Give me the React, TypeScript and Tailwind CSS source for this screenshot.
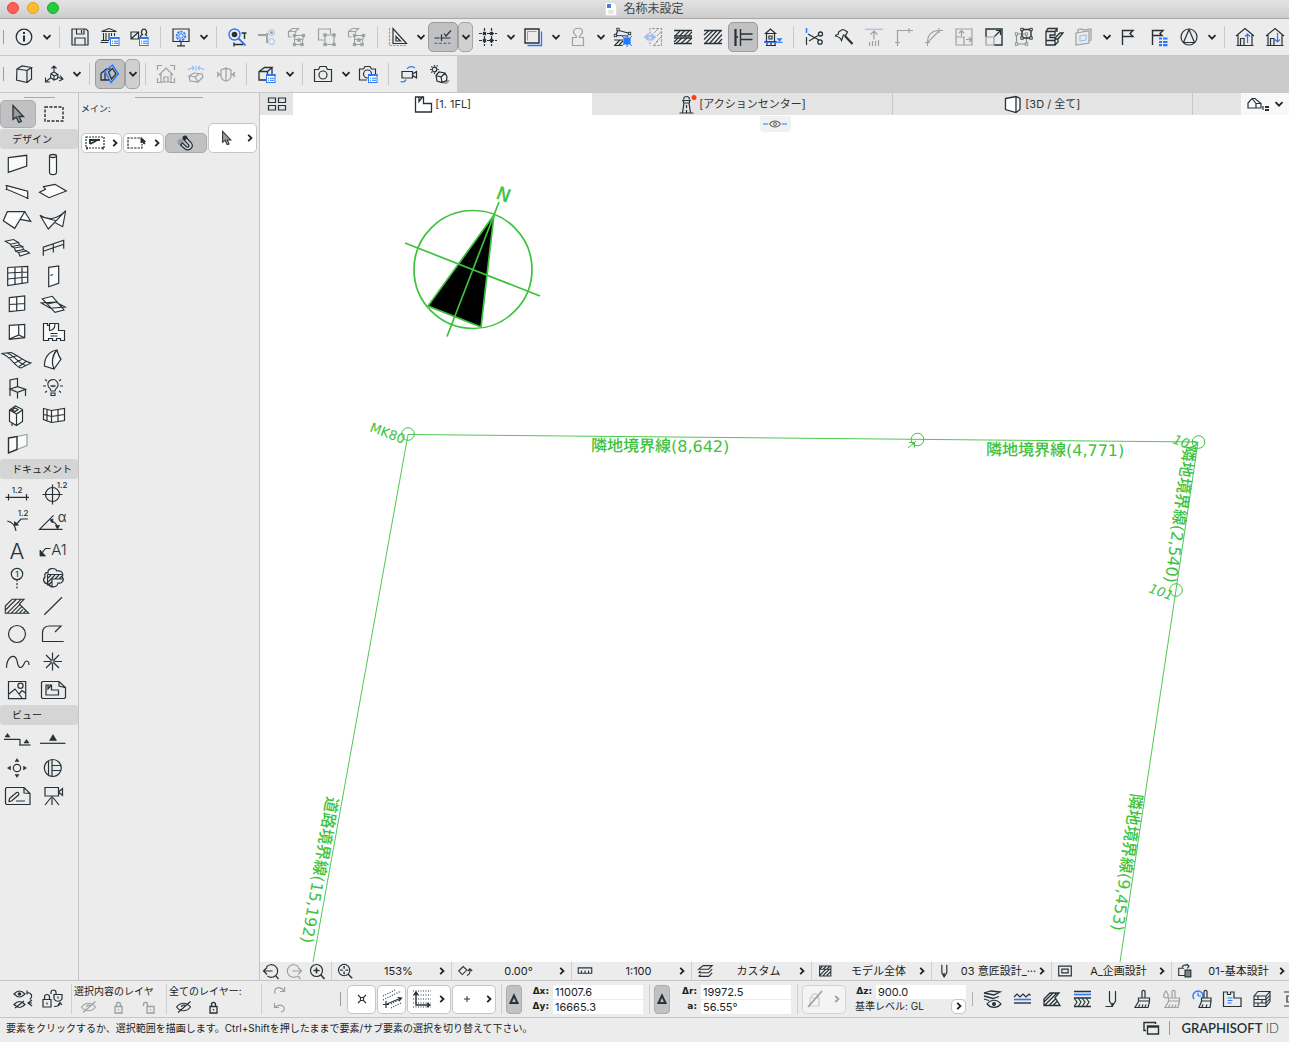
import React, { useState } from "react";

const BLUE = "#2979ff";
const GREEN = "#3cc23c";

interface PProps {
  d: string;
  c?: string;
  f?: string;
  w?: number;
  dash?: string;
}

// one stroked path of an icon
const P = ({ d, c = "currentColor", f = "none", w = 1.2, dash }: PProps) => (
  <path d={d} stroke={c} fill={f} strokeWidth={w} strokeDasharray={dash} />
);

const Badge = ({ x = 12, y = 12 }: { x?: number; y?: number }) => (
  <g transform={`translate(${x} ${y})`}>
    <rect x=".5" y=".5" width="8.5" height="8" fill="#fff" stroke={BLUE} />
    <P d="M0 1h9.5" c={BLUE} w={2} />
    <P d="M2 4.2h1M4 4.2h4M2 6.3h1M4 6.3h4" c={BLUE} w={1} />
  </g>
);

const T = ({ x, y, s, children }: { x: number; y: number; s: number; children: string }) => (
  <text x={x} y={y} fontSize={s} fontWeight="500" textAnchor="middle" fill="currentColor">
    {children}
  </text>
);

const nodes = (pts: number[][], fill = "currentColor") =>
  pts.map(([x, y]) => (
    <rect key={`${x}-${y}`} x={x - 1.2} y={y - 1.2} width="2.4" height="2.4" fill={fill} stroke="currentColor" strokeWidth=".9" />
  ));

interface Tool {
  name: string;
  icon: React.ReactNode;
  menu?: boolean;
  active?: boolean;
  dim?: boolean;
}

const house = "M3 11l9-7.5 9 7.5M5 10v10.5h14V10M7.5 20.5v-7h3.5v7M3.5 20.5h17";
const camera = "M3.5 7.5h4l1.500-3h6l1.500 3h4v12h-17z";
const nodeCube = (
  <>
    <P d="M3.500 12V6.500l4-3h6l-3 3h-7M10.500 6.500v2M3.500 12h3" />
    <P d="M9.500 10.500h9l-1.500 9H9.500zM9.500 14.500h8.500" w={1} />
    {nodes([[9.5, 10.5], [18.5, 10.5], [9.5, 19.5], [17, 19.5], [14, 15]])}
  </>
);

const mainTools: Tool[][] = [
  [
    { name: "情報", menu: true, icon: <><circle cx="12" cy="12" r="7.800" fill="none" stroke="currentColor" strokeWidth="1.300" /><P d="M12 10.500v6M12 7v2" w={2} /></> },
  ],
  [
    { name: "保存", icon: <><P d="M4 4h14l2 2v14H4z" /><P d="M8.500 4v5h7.500V4M13.500 5v3M7 20v-7h10v7" /></> },
    { name: "ライブラリ", icon: <><P d="M3.500 6.500h15M3.500 6.500l7.500-3 7.500 3M5.500 8v7M8 8v7M11 8v7M13.500 8v3M16.500 8v3M3 15.500h8M2.500 17.500h8" w={1.100} /><Badge /></> },
    { name: "属性", icon: <><P d="M3 7h7.500v7H3zM3 14l7.500-7M12.500 14V11l2-1.500a2.500 3 0 1 1 3 0l1.500 1.500" /><Badge x={11} /></> },
  ],
  [
    { name: "作業環境", menu: true, icon: <><P d="M4 4h16v12.500H4zM12 17v4M8 20.800h8" /><circle cx="12" cy="11" r="4.300" fill="none" stroke={BLUE} strokeWidth="1.800" strokeDasharray="2.200 1" /><circle cx="12" cy="11" r="2.200" fill="#ececec" stroke={BLUE} /></> },
  ],
  [
    { name: "検索", icon: <><circle cx="9.500" cy="9.500" r="5.500" fill="none" stroke={BLUE} strokeWidth="1.400" /><circle cx="9.500" cy="9.500" r="2.800" fill="currentColor" /><P d="M13.500 13.500l7 7" c={BLUE} w={1.800} /><P d="M16.500 8h5M19.500 8v6M9 19.500h9M9 17.500v4" w={1.400} /></> },
    { name: "接続", dim: true, icon: <><P d="M3 10h8M12 8v10" w={1.800} /><circle cx="16.500" cy="7.500" r="3" fill="none" stroke={BLUE} /><circle cx="16.500" cy="7.500" r="1.500" fill="currentColor" /><circle cx="16.500" cy="16.500" r="3" fill="none" stroke={BLUE} /></> },
    { name: "グループ化", dim: true, icon: nodeCube },
    { name: "グループ解除", dim: true, icon: <><P d="M9 15H3.500V4h12v5" /><P d="M10 10h9v9.500h-9z" />{nodes([[10, 10], [19, 10], [10, 19.5], [19, 19.5]])}</> },
    { name: "グループ停止", dim: true, icon: nodeCube },
  ],
  [
    { name: "定規", menu: true, icon: <><P d="M7 3.500V18.500h13.500zM10 11.500v4.500h4.500z" /><P d="M3.500 3v17.500h17.500" c="#f08a24" dash="2.500 1" /></> },
    { name: "ガイド線", menu: true, active: true, icon: <><P d="M3.500 13h5M9.500 13h10M10.500 9.500v6.500M13 8.500l2 2.500 5-5.500" /><P d="M3.500 18.300h16" c={BLUE} dash="3 1.500" /></> },
    { name: "グリッド", menu: true, icon: <><P d="M3 8.500h18M3 15.500h18M8.500 3v18M15.500 3v18" dash="3 1" />{nodes([[8.5, 8.5], [15.5, 8.5], [8.5, 15.5], [15.5, 15.5]])}</> },
    { name: "編集平面", menu: true, icon: <><P d="M4 4h14v14H4z" w={1.400} /><P d="M6.500 15.500v-9h9" c="#9aa0a3" w={1} /><P d="M20.500 6.500V20.500H6.500" c={BLUE} w={1.300} /></> },
    { name: "重力", menu: true, dim: true, icon: <P d="M6.500 20.500V12.500h4c1-2-3-3-3-5.500 0-5 9-5 9 0 0 2.500-4 3.500-3 5.500h4v8z" /> },
    { name: "要素編集", icon: <><P d="M8 5.500l9 2.500M5.500 10.500l12 .5" /><P d="M5 9.500l2-4" />{nodes([[4.5, 10.5], [7, 4.5], [18.5, 8.5]], "#ececec")}<P d="M3 15h9M3 20.500h9M4 20l5-5M8 20l4-4" /><P d="M13 13h6v6h-6z" c={BLUE} f={BLUE} /><P d="M11 11l10 10M21 11L11 21M16 10v12" c={BLUE} w={1} /></> },
    { name: "反転", dim: true, icon: <><P d="M7.500 8L3 12l4.500 4zM10.500 8l4.500 4-4.500 4z" c={BLUE} f={BLUE} w={.5} /><P d="M9 3v18" dash="2 1.500" /><P d="M11 3.500h9.500v17H11" dash="3 1" /><P d="M13 8l4-4M16 11l4-4M15 17l5-5M13 20l4-4" w={1} /></> },
    { name: "複合構造", icon: <><P d="M3 5.500h18M3 11h18M3 13h18M3 18.500h18" w={1.400} /><P d="M4 11l5-5M8.500 11l5-5M13 11l5-5M17 11l4-4M3 17l4-4M5 18.500l6-5.500M10 18.500l6-5.500M15 18.500l6-5.500" w={1.100} /></> },
    { name: "塗りつぶし", icon: <><P d="M3 5.500h18M3 18.500h18" w={1.400} /><P d="M3 10l5-4.500M3 14.500l9-9M4 18.500l12-13M8.500 18.500l11.500-13M13 18.500l8-9M17 18.500l4-4.500" w={1.200} /></> },
    { name: "基準線", active: true, icon: <><P d="M4.500 4v17" w={2.200} /><P d="M9.500 4v17M9.500 9h12M9.500 14.500h12M4 12h3" w={1.400} /></> },
    { name: "高度", icon: <><P d="M4.500 8.500L9.500 4l5 4.500zM5.500 8.500v8M13.500 8.500v8M8 11h3v3H8zM3.500 16.500h12M5 20.500h10M6 17v3.500M10 17v3.500M14 17v3.500" w={1.200} /><P d="M3 17.300h18.500" c={BLUE} /><P d="M16 13.500h5l-2.500 3z" c={BLUE} f={BLUE} w={.5} /></> },
  ],
  [
    { name: "切断", icon: <><P d="M4.500 3v5" c={BLUE} w={1.500} /><P d="M4.500 12v8M6 9l11 6M7 16l10-6" /><circle cx="18.500" cy="9" r="2" fill="none" stroke="currentColor" strokeWidth="1.300" /><circle cx="18" cy="17" r="2.200" fill="none" stroke="currentColor" strokeWidth="1.300" /></> },
    { name: "手斧", icon: <><P d="M3.500 10.500l3-1.500V7l4-2.500c2 0 3 1 5 2.500l-2 3.500-2-.5-2 5.500c-1-3-3-4-6-4.500z" /><P d="M13 11l7.500 8" w={2.200} /></> },
    { name: "高さ調整", dim: true, icon: <><P d="M3 4.300h18" c={BLUE} /><P d="M12 6v8.500M8.500 9.500L12 6l3.500 3.500M7.500 17v4M10.500 16v5M13.500 16v5M16.500 15v6" /></> },
    { name: "延長", dim: true, icon: <P d="M5.500 21V5.500H21M3 17.500h5M17 3v5" /> },
    { name: "フィレット", dim: true, icon: <P d="M5.500 21v-4C5.500 10 10 5.500 17 5.500h4M3 17.500h5M17 3v5M6 17L17 6" w={1.100} /> },
    { name: "伸縮", dim: true, icon: <P d="M4 4h16v16H4zM4 12h8v8M9.500 11V6M7 8l2.500-2.500L12 8M14 14.500h5M17 12l2.500 2.500L17 17" /> },
    { name: "サイズ変更", icon: <><P d="M12 20h8V4H4v8" w={1.400} /><P d="M4 12h8v8H4z" c="#9aa0a3" /><P d="M12.500 11.500l6-6M14 5.500h4.500V10" /></> },
    { name: "変形", icon: <><P d="M4.500 9v10h10V9z" c="#8a9093" /><P d="M10 4.500h9V13h-9z" w={1.400} /><g className="text-[#8a9093]">{nodes([[4.5, 9], [4.5, 19], [14.5, 19], [14.5, 9]], "#ececec")}</g>{nodes([[10, 4.5], [19, 4.5], [10, 13], [19, 13]], "#ececec")}</> },
    { name: "ソリッド", icon: <P d="M4 6.500h9V10H8v2.500h5v3H4zM4 6.500l2-3h9l-2 3M4 15.500v4.500h9v-4.500M13 20l3-3v-3M15 3.500V7M13 13l5-5h3l-5 6h-3" w={1.300} /> },
    { name: "イメージ", menu: true, dim: true, icon: <><P d="M4 8l13-2v12L4 20zM6 7V4.500l4-.5 1 1 8-1v11l-2 .5" /><P d="M8 11l6-1v5l-6 1z" c={BLUE} /></> },
    { name: "フラグ", icon: <P d="M5.500 20V5.500H16l-3 3 3 3H5.500" w={1.400} /> },
    { name: "フラグ一覧", icon: <><P d="M5.500 20V5.500H16l-3 3 2 2H5.500" w={1.400} /><P d="M12 13.500h3M16 13.500h4.500M12 17h3M16 17h4.500M12 20.200h3M16 20.200h4.500" c={BLUE} w={2.200} /></> },
    { name: "公差", menu: true, icon: <><circle cx="12" cy="12" r="8" fill="none" stroke="currentColor" strokeWidth="1.200" /><P d="M12 4.500L6.500 17.500h11z" /></> },
  ],
  [
    { name: "送信", icon: <><P d={house} /><P d="M14.500 18V9M12 11.500L14.500 9l2.500 2.500" c={BLUE} /></> },
    { name: "受信", icon: <><P d={house} /><P d="M14.500 8v9M12 14.500l2.500 2.500 2.500-2.500" c={BLUE} /></> },
  ],
];

const viewTools: Tool[][] = [
  [
    { name: "3D", icon: <P d="M5 7l10 1.500v12L4.500 18zM5 7l5-3 9.500 1.500L15 8.500M19.500 5.500v11.500L15 20.500" /> },
    { name: "軸", menu: true, icon: <P d="M12 10V4M9.500 6.500L12 4l2.500 2.500M9 15.500l-5 4M3.500 15.500V20H8M16 15l4.500 2M18 13.500l3 3.500-4 2M12 10l4 2.500-.5 4-3.500 1.500-3.500-2.500.5-4zM12 14l-3-2.500M12 14l4-1.500M12 14v4" w={1.100} /> },
  ],
  [
    { name: "3D断面", menu: true, active: true, icon: <><P d="M3 11.500L8.500 7h4M3 11.500V18h8M7 10.500V18" w={1.300} /><P d="M7 9.500L14.500 3l6 9-7.500 8.500z" c={BLUE} w={1.400} /><P d="M10.500 10l4-3.500L18 12l-4.500 5z" w={1.300} /></> },
  ],
  [
    { name: "ホーム", dim: true, icon: <P d="M3.500 8V3.500H8M16 3.500h4.500V8M3.500 16v4.500H8M16 20.500h4.500V16M5 13l7-7 7 7M7 12v8h10v-8M10 20v-5h4v5" /> },
    { name: "アップデート", dim: true, icon: <><P d="M12 4v5M4 8c1-2 3-2 6-2M8 4l2 2-2 2M20 8c-1-2-3-2-6-2M16 4l-2 2 2 2" c={BLUE} /><P d="M5 14l5-3 8 1 1 3-5 5-8-1zM5 14l6 1 3 5M11 15l4-3" /></> },
    { name: "ウォーク", dim: true, icon: <P d="M12 5v14M7 8c3-2 7-2 10 0v6c0 3-3 5-5 5s-5-2-5-5zM3 10l2.500 2.500L3 15M3 12.500h4M21 10l-2.500 2.500L21 15M17 12.500h4" /> },
  ],
  [{ name: "3D設定", menu: true, icon: <><P d="M11 18H4V9.500L9.500 5.500H17L12.500 9.500H4M12.500 9.500V12M17 5.500V12" w={1.300} /><Badge x={11} /></> }],
  [
    { name: "カメラ", menu: true, icon: <><P d={camera} /><circle cx="12" cy="13" r="4" fill="none" stroke="currentColor" strokeWidth="1.200" /></> },
    { name: "カメラ設定", icon: <><P d="M11 18H3.500V7h4L9 4.500h5L15.500 7h4v5" /><circle cx="11.500" cy="12" r="4" fill="none" stroke="currentColor" strokeWidth="1.200" /><Badge /></> },
  ],
  [
    { name: "フライスルー", icon: <><P d="M10 7c2-3 6-3 8-1M3.500 19.500c3 1 5 0 5.500-2" c={BLUE} w={1.300} /><P d="M5 9.500h10.500V16H5zM15.500 12l4-2.500v6.500l-4-2.500" /></> },
    { name: "日影", icon: <><circle cx="7.500" cy="7.500" r="2.300" fill="none" stroke="currentColor" strokeWidth="1.200" /><P d="M7.500 3v1.500M7.500 10.500V12M3 7.500h1.500M10.500 7.500H12M4.300 4.300l1 1M9.700 4.300l1-1M4.300 10.700l1-1" /><P d="M14 20l5-2 3 1-3 2.500z" c="#9aa0a3" f="#9aa0a3" /><P d="M9 13.500l3-3.500 6 1 2 3.500-.5 4-4.500 2-5-1.500zM9 13.500l5 1.500 1 5M14 15l4-4" f="#ececec" /></> },
  ],
];

const ChevronDown = () => (
  <svg viewBox="0 0 10 10" className="size-[10px]">
    <P d="M1.500 3.200L5 6.700l3.500-3.500" c="#222" w={1.700} />
  </svg>
);

const ChevronRight = ({ className = "text-[#222]" }: { className?: string }) => (
  <svg viewBox="0 0 10 10" className={`size-[10px] shrink-0 ${className}`}>
    <P d="M3.200 1.800L6.500 5 3.200 8.200" w={1.800} />
  </svg>
);

function ToolbarRow({ groups }: { groups: Tool[][] }) {
  return (
    <>
      {groups.map((group, i) => (
        <React.Fragment key={i}>
          {i > 0 && (
            <div className="flex w-[11px] shrink-0 justify-center">
              <span className="h-[22px] w-px bg-[#c9c9c9]" />
            </div>
          )}
          {group.map((tool) => (
            <React.Fragment key={tool.name}>
              <button
                type="button"
                aria-label={tool.name}
                className={`flex h-[30px] w-[30px] shrink-0 items-center justify-center rounded-[5px] border ${
                  tool.active ? "border-[#9c9c9c] bg-[#c1c1c3]" : "border-transparent"
                }`}
              >
                <svg viewBox="0 0 24 24" className={`size-6 shrink-0 text-[#263238] ${tool.dim ? "opacity-40" : ""}`}>
                  {tool.icon}
                </svg>
              </button>
              {tool.menu && (
                <button
                  type="button"
                  aria-label={`${tool.name} メニュー`}
                  className={`flex h-[30px] w-[15px] shrink-0 items-center justify-center rounded-[5px] border ${
                    tool.active ? "border-[#a4a4a4] bg-[#d0d0d2]" : "border-transparent"
                  }`}
                >
                  <ChevronDown />
                </button>
              )}
            </React.Fragment>
          ))}
        </React.Fragment>
      ))}
    </>
  );
}

const W = "#fafafa";

const designTools: [string, React.ReactNode][] = [
  ["壁", <P d="M4.300 7.700L22.700 5.300V16L4.300 22.300z" f={W} />],
  ["柱", <><P d="M9.500 6.500V22c0 3.500 7 3.500 7 0V6.500" f={W} /><ellipse cx="13" cy="6" rx="3.500" ry="1.500" fill={W} stroke="currentColor" strokeWidth="1.300" /></>],
  ["梁", <P d="M2.700 7.700l21 5.500v7l-21-9zM1.500 7.500h2M1.500 11.500h2M22.500 20.500h2" f={W} />],
  ["スラブ", <P d="M-.5 14.300l6-3-2-2.600L15 6.300l11.300 6.700L9 19.700z" f={W} />],
  ["屋根", <P d="M-.7 14.700l4-9h17.400l-10 16.600zM20.700 5.700l6 9.600-10.500-2" f={W} />],
  ["シェル", <P d="M0 9.300C8 15 18 13 25.700 4.700L8.300 23zM25.700 4.700l-3 16-7.500-4M2 11L15.500 14.500" f={W} w={1.100} />],
  ["階段", <P d="M1.300 7.300L9.500 5.500l5 3-8 1.700zM6.500 10.200l1 2.300 8-1.500-1-2.500M7.500 12.500l3 1.500 8-1.500-3-1.500M10.500 14l1 3 8-1.500-1-3M11.500 17l3 1.500 8-1.500-3-1.500M14.500 18.500L16 22l9.500-3-3-2" f={W} w={1.100} />],
  ["手摺り", <P d="M3.300 21.700v-8.500L23.700 6.300v8.500M3.300 17.300l20.400-7M13.300 10v8.500" />],
  ["カーテンウォール", <P d="M3.700 5.500l20-1v16l-20 3zM3.700 11l20-1M3.700 17l20-2M11 5v18M18 5v16.500" f={W} />],
  ["ドア", <P d="M8.700 5.300L18.700 4v17.300L8.700 24.700zM10.500 13.500l2.500-1" f={W} />],
  ["窓", <P d="M5.300 7.700L20.700 6v14L5.300 21.700zM12.700 7v14M5.300 14.500l15.400-1" f={W} />],
  ["天窓", <P d="M2.300 8.700l10-2.400L24 20l-9 2.300zM1.300 13l9 5.300 15-1.300-9.500-5zM7 14l10-2" f={W} w={1.100} />],
  ["開口", <P d="M5.300 7.300l15.400-1v13.400L5.300 21.300zM14.700 6.800V17l-9.400 4M14.700 17l6 2.700" f={W} />],
  ["ゾーン", <><P d="M3.500 5.500h4v2h2v-2h9v7h6v10h-4v-2h-4v2h-4v-2h-4v2h-5z" f={W} /><P d="M9.500 7.500v5c4 0 5.500-3 5.500-7M10.500 15.500h7M10.500 18h7" w={1.100} /></>],
  ["メッシュ", <P d="M-2.700 7.500L7 6.500c6 2 11 8 20 10.500l-10 5C10 20 7 10-2.700 7.500zM2.500 7C11 9 13 17 22 19.500M5 12l8.500-2.500M10 17.500l8.500-4.500M15 20.500l7-5" w={1.100} f={W} />],
  ["モルフ", <P d="M4.500 20C4 12 9 5 17 4c1 4 2 7 4 9l-7 10zM17 4c-5 5-6 13-3 19" f={W} />],
  ["オブジェクト", <P d="M6 22V6l7.500-1.500V13M6 15l7.500-2.300 8 2.600-8 3zM13.500 18.500v6M21.500 15.500V22" />],
  ["ランプ", <P d="M8 11.500a5 5 0 1 1 8 3l-1 2.500h-4l-1-2.500a5 5 0 0 1-2-3M11 19v2.500h4V19zM10.500 11.500l1.500 1 1-1 1 1 1.500-1M3 12h3M20 12h3M5 5.500l2 1.500M21 5.500L19 7M5 18.500l2-1.500M21 18.500l-2-1.500" w={1.100} />],
  ["設備", <P d="M5.500 8l6-4 7 3.500v12l-6 4-7-4zM5.500 8l7 4 6-4M12.500 12v11.500M8 8l3-2 3 1.500-3 2zM8 21v3" f={W} />],
  ["カーテン", <P d="M3.500 6.500l8 2 13-2v12l-13 2-8-3zM3.500 12.500l8 2 13-2M11.500 8.500v12M7 7.500v12M18 7.500v12" f={W} />],
  ["端部", <><P d="M13 6.500l10-2v11l-10 4" c="#9aa0a3" f={W} /><P d="M4.500 8l8.500-1.500v13L4.500 23z" f={W} w={1.400} /></>],
];

const documentTools: [string, React.ReactNode][] = [
  ["寸法", <><P d="M1.500 17.300h23.500M4.500 14v6.500M22.500 14v6.500" /><T x={13} y={13} s={8}>1.2</T></>],
  ["高さ寸法", <><circle cx="12.500" cy="14.500" r="7" fill="none" stroke="currentColor" strokeWidth="1.200" /><P d="M12.500 4.500v20M2.500 14.500h20" /><T x={22} y={8} s={8}>1.2</T></>],
  ["半径寸法", <><P d="M3.300 13c5 1 8 5 8.700 10M12 16.500l5-5.500h7" /><P d="M10.500 17.500v-4l4 3.500z" f="currentColor" w={.8} /><T x={19} y={8} s={8}>1.2</T></>],
  ["角度寸法", <><P d="M22.500 21.300H-.5l14-14M11 13c4 1 6 4 6.500 7" /><P d="M10 12l3-1-.5 4zM15.500 17.500h4l-2 3.500z" f="currentColor" w={.8} /><text x="22" y="14" fontSize="13" textAnchor="middle" fill="currentColor">α</text></>],
  ["テキスト", <text x="13" y="22.500" fontSize="22" fontWeight="300" textAnchor="middle" fill="currentColor">A</text>],
  ["ラベル", <><P d="M1.500 17.500l4-5h5" /><P d="M0 14v6h5.500z" f="currentColor" w={.8} /><text x="19" y="18.500" fontSize="15" fontWeight="300" textAnchor="middle" fill="currentColor">A1</text></>],
  ["通り芯", <><circle cx="13" cy="10" r="5.700" fill="none" stroke="currentColor" strokeWidth="1.200" /><T x={13} y={13} s={8}>1</T><P d="M13 15.500v9" dash="2 1.500" /></>],
  ["変更", <><P d="M8 9c-1-5 7-6 9-2 5-1 7 3 5 6 3 3 0 7-4 6-1 5-8 5-9 1-5 0-7-4-4-7-1-3 1-5 3-4z" /><P d="M7.500 10.500H22M7.500 10.500v11M12 15h10.500M12 15v8M8 14l3-3M8 18l7-7M8 21.500l4-4M15 15l4-4M19 15l3-3" w={1.100} /></>],
  ["塗りつぶし", <P d="M1.300 21.300V14L8 7.300h12L15.300 12l9.400 9.300zM1.500 18L12 7.500M3 21.300l14-14M7 21.300l8.500-8.500M11 21.300l6.500-6.500M15 21.300l4-4M19 21.300l2.500-2.500" w={1.100} />],
  ["線", <P d="M4.300 22.700L22 5.300" />],
  ["円", <circle cx="13" cy="14" r="8.500" fill="none" stroke="currentColor" strokeWidth="1.200" />],
  ["ポリライン", <P d="M23.700 21.500H2.500V13c0-5 3-7 7-7H21l-6 6" />],
  ["スプライン", <P d="M2.500 19.700C2.500 11 8 6 11.500 9.500c3 3 1 10 5 10s3-6.500 6-6.500c2 0 2.500 2 2.500 4" />],
  ["ホットスポット", <><P d="M12.500 4.500v7M12.500 15.500v7M3.500 13.500h7M14.500 13.500h7.500M6 7l5 5M19 7l-5 5M6 20l5-5M19 20l-5-5" /><rect x="11" y="12" width="3" height="3" fill="none" stroke="currentColor" /></>],
  ["図", <><P d="M4.500 5.500h17.200v17.200H4.500zM5 18l6-5 7 9M15 18l3-3.500 3.500 2.500" /><circle cx="16.500" cy="9.800" r="2.600" fill="none" stroke="currentColor" strokeWidth="1.200" /></>],
  ["図面", <><P d="M2.500 5.500H19l6.500 6v10l-1 1H2.500l-1-1v-15zM19 5.500v4.500l6 1.500" /><P d="M6 9h5.500v5h7v5H6zM8 9v4l3.500-4" /></>],
];

const viewPalette: [string, React.ReactNode][] = [
  ["断面図", <><P d="M0 13.300h16M16 13.300v5.500" /><P d="M15 19h11.500" /><P d="M1 11l2.500-3.500L6 11zM20 17l2.500-3.500L25 17z" f="currentColor" w={.6} /></>],
  ["立面図", <><P d="M0 17.300h25.500" /><P d="M9.500 14.500l3.500-6 3.500 6z" f="currentColor" w={.6} /></>],
  ["展開図", <><circle cx="13" cy="14" r="3.700" fill="none" stroke="currentColor" strokeWidth="1.200" /><P d="M11 7.500l2-3 2 3zM11 20.500l2 3 2-3zM6.500 12l-3 2 3 2zM19.500 12l3 2-3 2z" f="currentColor" w={.5} /></>],
  ["詳細図", <><circle cx="12.800" cy="14" r="8.500" fill="none" stroke="currentColor" strokeWidth="1.200" /><P d="M8.500 7v14M12 5.500v17M12 11.500h9M12 16.500h9" /></>],
  ["ワークシート", <><P d="M2.500 5.500H20l6 6v11H2.500l-1-1v-15zM20 5.500V11l6 .5" /><P d="M5.500 16.500l7-6c2-.5 3 1 2 2.500l-7 6-2.500.500zM12 19h9" /></>],
  ["カメラ", <P d="M5 5.500h13.500V14H5zM18.500 10l4-3.500v7zM12 14v2M11 15.500L5 23M13 15.500l6 7.500M12 15v8" />],
];

function Palette({ title, tools }: { title: string; tools: [string, React.ReactNode][] }) {
  return (
    <section>
      <h2 className="mt-px h-5 rounded-[3px] bg-[#d5d5d5] pl-3 text-[10px] leading-5">{title}</h2>
      <div className="mt-px grid w-[72px] grid-cols-2">
        {tools.map(([name, icon]) => (
          <button key={name} type="button" aria-label={name} className="flex h-7 items-center justify-center">
            <svg viewBox="0 0 28 28" className="size-7 overflow-visible text-[#263238]">
              {icon}
            </svg>
          </button>
        ))}
      </div>
    </section>
  );
}

const Cursor = ({ className }: { className: string }) => (
  <svg viewBox="0 0 14 20" className={className}>
    <P d="M2 1.500v14l3.300-2.500 2.500 5.500 2.500-1L8 12.500h4.500z" c="#263238" f="#9a9da0" w={1.300} />
  </svg>
);

const whiteBtn = "flex items-center justify-center rounded-[5px] border border-[#c6c6c6] bg-white";

function InfoBox() {
  return (
    <aside className="w-[181px] shrink-0 border-r border-[#c3c3c3]">
      <div className="mx-auto mt-1 h-px w-[68px] bg-[#a8a8a8]" />
      <p className="mt-1 pl-[2px] text-[9px] leading-[14px]">メイン:</p>
      <div className="mt-[7px] flex items-end gap-px pl-[2px]">
        <button type="button" aria-label="設定" className={`${whiteBtn} h-5 w-[41px] gap-[5px] pl-[2px]`}>
          <svg viewBox="0 0 20 14" className="h-[14px] w-5 text-[#263238]">
            <P d="M1 1h18v11H1z" dash="2 1" w={1.200} />
            <P d="M5 3v5M5 8l4-2 4-2.500M4 4h5M9 4h6" w={1.800} />
            <P d="M2 11v2.500M18 11v2.500" w={1.500} />
          </svg>
          <ChevronRight />
        </button>
        <button type="button" aria-label="選択方法" className={`${whiteBtn} h-5 w-[41px] gap-[5px] pl-[2px]`}>
          <svg viewBox="0 0 20 14" className="h-[14px] w-5 text-[#263238]">
            <P d="M13 2H1v10h14V8" dash="2.500 1" />
            <P d="M14 1.500V7l1.500-1 1.500 2 1-.5-1-2h1.500z" f="currentColor" w={1} />
          </svg>
          <ChevronRight />
        </button>
        <button type="button" aria-label="クイック選択" className="flex h-5 w-[42px] items-center justify-center rounded-[5px] border border-[#a9a9a9] bg-[#c1c1c3]">
          <svg viewBox="0 0 18 18" className="size-[18px] text-[#263238]">
            <circle cx="3.500" cy="8" r="3" fill="#9b9b9d" />
            <circle cx="8" cy="4" r="2.500" fill="currentColor" />
            <P d="M9.500 4l4.500 4.500c4 5-2.500 9.500-6.500 6L3.500 11l2-2 4 3.800c1.800 1.200 3.200-.6 2-2.100L7.500 6.500z" f="#d4d4d6" w={1.200} />
          </svg>
        </button>
        <button type="button" aria-label="矢印ツール" className={`${whiteBtn} h-[30px] w-[49px] gap-[13px] pl-[10px]`}>
          <Cursor className="h-4 w-[11px]" />
          <ChevronRight />
        </button>
      </div>
    </aside>
  );
}

function Drawing() {
  return (
    <svg
      viewBox="260 115 1029 847"
      preserveAspectRatio="xMinYMin slice"
      className="absolute inset-0 h-full w-full font-['DejaVu_Sans','Noto_Sans_CJK_JP',sans-serif]"
      fill="none"
      stroke={GREEN}
    >
      <circle cx="473" cy="269.500" r="59" strokeWidth="1.700" />
      <path d="M494 215l-66 91 53 21z" fill="#000" strokeWidth="1.700" />
      <path d="M499 202l-52 134.500M405 243l135 53" strokeWidth="1.700" />
      <path d="M408 434.500L1198 442M408 434.500L313 962M1198 442l-22 148-56 372" strokeWidth=".9" />
      <path d="M908 448l8-7M909 442.500h5.500v5" />
      <circle cx="408" cy="434" r="6.300" />
      <circle cx="917.500" cy="439.500" r="6.300" />
      <circle cx="1198.500" cy="442" r="6.300" />
      <circle cx="1176" cy="590" r="6.300" />
      <g fill={GREEN} stroke="none" fontSize="16" fontWeight="500">
        <text transform="translate(495 198) rotate(21)" fontSize="18" stroke={GREEN} strokeWidth=".4">N</text>
        <text transform="translate(591 451) rotate(.5)">隣地境界線(8,642)</text>
        <text transform="translate(986 455) rotate(.5)">隣地境界線(4,771)</text>
        <text transform="translate(1184 445) rotate(98)">隣地境界線(2,540)</text>
        <text transform="translate(1131 793) rotate(98)">隣地境界線(9,453)</text>
        <text transform="translate(327 796) rotate(100)">道路境界線(15,192)</text>
        <g fontSize="13">
          <text transform="translate(369 431) rotate(21)">MK80</text>
          <text transform="translate(1172 443) rotate(20)" fontStyle="italic">102</text>
          <text transform="translate(1148 592) rotate(20)" fontStyle="italic">101</text>
        </g>
      </g>
    </svg>
  );
}

function Tabs() {
  const [tab, setTab] = useState(0);
  const tabs = [
    { label: "[1. 1FL]", icon: <P d="M1.500 2h8v6.500h8V17h-16zM5 2v4.500L8.500 2" w={1.300} /> },
    { label: "[アクションセンター]", icon: <><P d="M5.500 4.500c0-4 6-4 6 0M4 5.500h9M5.500 8h6M5.500 6v2M11.500 6v2M6 8L4.500 17.500M11 8l1.500 9.500M1.500 18h14M8.500 10v3M8.500 15v2.500" w={1.200} /><circle cx="16" cy="2.500" r="2.500" fill="#ff3b12" /></> },
    { label: "[3D / 全て]", icon: <P d="M1.500 3.500L12 1.500l4 2v11l-4 3-10.500-3zM12 1.500v16" f="#fff" w={1.300} /> },
  ];
  return (
    <div className="flex h-[22px] shrink-0 bg-[#e4e4e4] text-[11px] text-[#333]">
      <button type="button" aria-label="タブ一覧" className="flex w-[33px] shrink-0 items-center justify-center">
        <svg viewBox="0 0 20 16" className="h-4 w-5 text-[#263238]">
          <P d="M1.500 2h7v4.500h-7zM11.500 2h7v4.500h-7zM1.500 9.500h7V14h-7zM11.500 9.500h7V14h-7z" />
        </svg>
      </button>
      {tabs.map((t, i) => (
        <button
          key={t.label}
          type="button"
          onClick={() => setTab(i)}
          className={`flex flex-1 items-center justify-center gap-[2px] ${tab === i ? "bg-white" : "border-r border-[#c8c8c8]"}`}
        >
          <svg viewBox="0 0 19 19" className="size-[19px] overflow-visible text-[#263238]">
            {t.icon}
          </svg>
          {t.label}
        </button>
      ))}
      <div className="w-12 shrink-0" />
      <button type="button" aria-label="ビュー切替" className="flex w-12 shrink-0 items-center justify-center gap-1 bg-[#f8f8f8]">
        <svg viewBox="0 0 24 18" className="h-[18px] w-6 text-[#263238]">
          <P d="M2 13V8l4-4.500h3l6 5V13zM6 3.500l4 5h5M10 8.500V13M17 11v4" />
          <P d="M19 12h4M19 15h4" w={1.800} />
        </svg>
        <ChevronDown />
      </button>
    </div>
  );
}

const quickOptions: [string, React.ReactNode][] = [
  ["153%", <><circle cx="9" cy="9" r="6.300" fill="none" stroke="currentColor" strokeWidth="1.300" /><P d="M13.500 13.500L18 18M9 4.500v3M9 10.500v3M4.500 9h3M10.500 9h3" w={1.600} /></>],
  ["0.00°", <P d="M3 10l5-5 4 4-5 5zM12 15c3-1 4-4 3.500-7M13 10l2.500-2.500L18 10" />],
  ["1:100", <P d="M2.500 6.500h15v6h-15zM6 9.500v3M10 9.500v3M14 9.500v3" />],
  ["カスタム", <P d="M3 8l5-4h10l-4 4zM3 12h11l4-4M3 16h11l4-4M3 12l2-2M3 16l2-2" />],
  ["モデル全体", <P d="M4 4.500h12.500v11H4zM4 8h12.500M4 8l3-3M8 8l3-3M12 8l3-3M4 15l7-7M8 15l7-7M12 15l4-4" />],
  ["03 意匠設計_···", <P d="M6.500 3v9L9 16.500l3-4.500V3M9 12v4" w={1.300} />],
  ["A_企画設計", <P d="M3 4.500h14v11H3zM6.500 8h7v4h-7z" w={1.300} />],
  ["01-基本設計", <><P d="M10 15H3V7h6M7 6V5c2-2 5-2 7-1M12 2.500L14.500 4.500 12.500 7" /><P d="M10 9h6.500v7.500H10z" f="#7f8486" /></>],
];

function QuickBar() {
  return (
    <div className="flex h-[18px] shrink-0 overflow-hidden bg-[#ececec] text-[11px]">
      <div className="flex w-[71px] shrink-0 items-center gap-[5px] pl-[2px] text-[#263238]">
        <button type="button" aria-label="前のズーム">
          <svg viewBox="0 0 18 18" className="size-[18px]"><P d="M4.500 5a6.300 6.300 0 1 1 1 9M1.500 9h9M5 5.500L1.500 9 5 12.500M14 14l2.500 3" /></svg>
        </button>
        <button type="button" aria-label="次のズーム" className="text-[#9aa0a3]">
          <svg viewBox="0 0 18 18" className="size-[18px]"><P d="M13.500 5a6.300 6.300 0 1 0-1 9M7.500 9h9M13 5.500L16.500 9 13 12.500M13 14l2.500 3" /></svg>
        </button>
        <button type="button" aria-label="拡大">
          <svg viewBox="0 0 18 18" className="size-[18px]"><circle cx="8.500" cy="8.500" r="6" fill="none" stroke="currentColor" strokeWidth="1.200" /><P d="M12.800 12.800L16.500 17M5.500 8.500h6M8.500 5.500v6" w={1.500} /></svg>
        </button>
      </div>
      {quickOptions.map(([label, icon]) => (
        <button key={label} type="button" className="flex w-[120px] shrink-0 items-center border-l border-[#cfcfcf] pr-1 pl-1">
          <svg viewBox="0 0 20 20" className="size-[18px] shrink-0 text-[#263238]">{icon}</svg>
          <span className="flex-1 pl-[6px] text-center whitespace-nowrap">{label}</span>
          <ChevronRight />
        </button>
      ))}
    </div>
  );
}

const Sep = ({ className = "" }: { className?: string }) => <span className={`h-[30px] w-px shrink-0 bg-[#cfcfcf] ${className}`} />;

const eyeOff = <P d="M1.500 8c4-5 10-5 14 0-4 5-10 5-14 0zM3 13.500L15.500 2.500M6.500 8a2.200 2.200 0 0 1 4-1" />;
const lock = <P d="M5 7.500h7V14H5zM6.500 7.500V5.500a2 2.200 0 0 1 4 0v2M8.500 10v1.500" w={1.300} />;
const unlock = <P d="M7 7.500h7V14H7zM3.500 7V5.500a2 2.200 0 0 1 4 0v2M10.500 10v1.500" w={1.300} />;

const MiniButton = ({ name, dim, children }: { name: string; dim?: boolean; children: React.ReactNode }) => (
  <button type="button" aria-label={name} className={dim ? "text-[#9aa0a3]" : "text-[#263238]"}>
    <svg viewBox="0 0 17 16" className="h-4 w-[17px]">{children}</svg>
  </button>
);

function Field({ label, value, id }: { label: string; value: string; id: string }) {
  const [text, setText] = useState(value);
  return (
    <div className="flex items-center gap-1">
      <label htmlFor={id} className="w-[23px] text-right font-['DejaVu_Sans',sans-serif] text-[9px] font-bold whitespace-nowrap">
        {label}
      </label>
      <input
        id={id}
        value={text}
        onChange={(e) => setText(e.target.value)}
        className="h-[14px] w-[90px] bg-white pl-[2px] text-[11px] leading-[14px] outline-none"
      />
    </div>
  );
}

const DeltaButton = ({ name }: { name: string }) => (
  <button type="button" aria-label={name} className="flex h-[29px] w-4 shrink-0 items-center justify-center rounded-[4px] border border-[#adadad] bg-[#c1c1c3]">
    <svg viewBox="0 0 12 12" className="size-3 shrink-0"><P d="M6 2.500L2.500 10h7z" c="#263238" w={2} /></svg>
  </button>
);

const brush = "M12 11V4.500c0-1.500 3-1.500 3 0V11M8.500 14v-3h11v3zM8.500 14.500L5 20.500h13l1.500-6M8.500 20l1.500-2.500M12 20l1-2.500M15 20l1-2.500";

const optionTools: [string, React.ReactNode][] = [
  ["レイヤー設定", <><P d="M4 6l7-2 9 1-6 3zM4 9l9 2.500 6-2M4 12l5 1.500" w={1.300} /><P d="M7 17c4-5 10-5 14 0-4 4.500-10 4.500-14 0z" f="#ececec" /><circle cx="14" cy="17" r="2" fill="currentColor" /></>],
  ["線種", <><P d="M4 10l3-3 3 3 3-3 3 3 3-3 1.500 1.500" /><P d="M4 12.500h17" c={BLUE} w={1.600} /><P d="M4 16h17" w={1.400} /></>],
  ["塗りつぶし", <P d="M4 18.500V12L10 6h9l-4 4.500 5 8zM4.500 14.500L13 6M5 18L16.500 6.500M9 18.500l7-7M13 18.500l4-4" w={1.300} />],
  ["複合構造", <><P d="M4 4.500h17M4 11h17M4 19.500h17" w={1.300} /><P d="M4 7.500h17" c={BLUE} w={1.600} /><P d="M4 11l3 4-2.500 4M8 11l3 4-2.500 4M12 11l3 4-2.500 4M16 11l3 4-2.500 4" w={1.200} /></>],
  ["ペン", <P d="M9.500 4v10l3 5 3-5V4M5.500 19.500h7M12.500 16v3" />],
  ["ビルディングマテリアル", <P d={brush} />],
  ["表面材質", <g opacity=".4"><P d="M6 4c4 5 2 7 0 7s-4-2 0-7z" /><P d={brush} /></g>],
  ["更新", <><circle cx="8" cy="9" r="5" fill="none" stroke={BLUE} strokeWidth="1.400" strokeDasharray="24 8" strokeDashoffset="-12" /><P d="M8 9V5.500M8 9h3" c={BLUE} /><P d="M14 11V4.500c0-1.500 3-1.500 3 0V11M11.500 14v-3h9.500v3zM11.500 14.500L9 20.500h11l1-6M12 20l1-2.500M16 20l1-2.500" f="#ececec" /></>],
  ["ゾーン", <><P d="M3.500 5h4v2.500h3V5H14v6h7v8.500H3.500z" /><P d="M7.500 11h5M7.500 13.500h5M7.500 16h4" c={BLUE} /></>],
  ["プロファイル", <P d="M4 9h12v10.500H4zM4 9l4-4.500h12L16 9M20 4.500v10l-4 5M4 12.500h12l4-4.500M4 16h12l4-4.500M8 9v3.500M12 12.500V16M8 16v3.500" w={1.100} />],
  ["情報", <P d="M4 5h14v4H7v6h12v4H4" />],
];

function CoordinateBar() {
  return (
    <div className="flex h-[37px] shrink-0 items-center overflow-hidden border-t border-[#c6c6c6] text-[11px]">
      <span className="ml-[3px] h-[14px] w-px bg-[#9c9c9c]" />
      <div className="ml-2 flex gap-[6px] text-[#263238]">
        <button type="button" aria-label="表示切替">
          <svg viewBox="0 0 24 24" className="size-6"><P d="M3 7c4-4 7-4 11 0-4 4-7 4-11 0zM3 17.500c4-4 7-4 11 0-4 4-7 4-11 0zM4 21l9-7M16 5.500c5 .5 6 4 3 7M16 7.500v-4M21 13l-4 3 4 3M17 16h4" /><circle cx="8.500" cy="7" r="1.800" fill="currentColor" /></svg>
        </button>
        <button type="button" aria-label="ロック切替">
          <svg viewBox="0 0 24 24" className="size-6"><P d="M2 12.500h8V20H2zM3.500 12.500V10a2.500 2.500 0 0 1 5 0v2.500M6 15.500v2M13 7.500h8V12c-2 3-6 3-8 0zM10 7V5.500a2.500 2.500 0 0 1 5 0v2M17 9.500v2M13 19.500c4 0 6-1 6-3.500M17 18l2-2.500 2 2.500" /></svg>
        </button>
      </div>
      <Sep className="ml-[6px]" />
      <div className="ml-[2px] w-[92px] shrink-0 whitespace-nowrap">
        <p className="text-[10px] leading-4">選択内容のレイヤ</p>
        <div className="flex gap-[13px] pl-[6px]">
          <MiniButton name="非表示" dim>{eyeOff}</MiniButton>
          <MiniButton name="ロック" dim>{lock}</MiniButton>
          <MiniButton name="ロック解除" dim>{unlock}</MiniButton>
        </div>
      </div>
      <Sep />
      <div className="ml-[2px] w-[92px] shrink-0 whitespace-nowrap">
        <p className="text-[10px] leading-4">全てのレイヤー:</p>
        <div className="flex gap-[13px] pl-[6px]">
          <MiniButton name="全て表示">{eyeOff}</MiniButton>
          <MiniButton name="全てロック">{lock}</MiniButton>
        </div>
      </div>
      <Sep />
      <div className="ml-[9px] flex flex-col">
        <MiniButton name="やり直し" dim><P d="M4 10.500c-2-6 5-8 9-2.500M13.500 4v4.500H9" /></MiniButton>
        <MiniButton name="取り消し" dim><P d="M10 13c7-2 2-10-6-5M3.500 4v4.500H8" /></MiniButton>
      </div>
      <span className="ml-[52px] h-[14px] w-px shrink-0 bg-[#9c9c9c]" />
      <div className="ml-[6px] flex shrink-0 gap-px">
        <button type="button" aria-label="スナップ" className={`${whiteBtn} h-[29px] w-[29px]`}>
          <svg viewBox="0 0 12 12" className="size-3 text-[#263238]"><P d="M2 2l2.500 2.500h3L10 2M2 10l2.500-2.500h3L10 10M4.500 4.500v3M7.500 4.500v3" /></svg>
        </button>
        <button type="button" aria-label="スナップ参照" className={`${whiteBtn} h-[29px] w-[29px]`}>
          <svg viewBox="0 0 22 22" className="size-[22px] text-[#263238]">
            <P d="M2 8l12-6M2 12l18-9M10 16l10-5M10 20l10-5" dash="1 1.500" w={1.100} />
            <P d="M5 13v7M2 16.500h6M6 16l14-6M16.500 9.500l4 .5-2.500 3" />
          </svg>
        </button>
        <button type="button" aria-label="グリッドスナップ" className={`${whiteBtn} h-[29px] w-[44px] gap-1`}>
          <svg viewBox="0 0 22 22" className="size-[22px] text-[#263238]">
            <P d="M2 3h18M2 7h18M2 11h18M2 15h18M2 19h18" dash="1 1.500" w={1} />
            <P d="M5 5v12h13M3 7l2-3 2 3M16 15l3 2-3 2" w={1.400} />
          </svg>
          <ChevronRight />
        </button>
        <button type="button" aria-label="原点" className={`${whiteBtn} h-[29px] w-[44px] gap-3 pl-2`}>
          <svg viewBox="0 0 10 10" className="size-[10px] text-[#263238]"><P d="M5 2v6M2 5h6" w={1} /></svg>
          <ChevronRight />
        </button>
      </div>
      <Sep className="ml-[5px]" />
      <div className="ml-1 flex shrink-0 items-center gap-[6px]">
        <DeltaButton name="相対座標" />
        <div className="ml-[-2px] flex flex-col gap-px">
          <Field id="dx" label="Δx:" value="11007.6" />
          <Field id="dy" label="Δy:" value="16665.3" />
        </div>
        <Sep />
        <div className="-ml-[2px]"><DeltaButton name="相対極座標" /></div>
        <div className="-ml-[2px] flex flex-col gap-px">
          <Field id="dr" label="Δr:" value="19972.5" />
          <Field id="a" label="a:" value="56.55°" />
        </div>
        <Sep />
      </div>
      <button type="button" aria-label="重力" className="ml-1 flex h-[29px] w-[44px] shrink-0 items-center justify-center gap-2 rounded-[5px] border border-[#d3d3d3] bg-[#f4f4f4] text-[#9aa0a3]">
        <svg viewBox="0 0 18 20" className="h-5 w-[18px]"><P d="M4 9h9v8H4zM6 9c-2-5 7-6 6 0" c="#c9cbcc" /><P d="M2 18L16 2" w={1.700} /></svg>
        <ChevronRight className="text-[#9aa0a3]" />
      </button>
      <div className="ml-[3px] w-[117px] shrink-0">
        <Field id="dz" label="Δz:" value="900.0" />
        <div className="flex h-[15px] items-center justify-between pl-[6px]">
          <span className="text-[10px]">基準レベル: GL</span>
          <button type="button" aria-label="基準レベル" className={`${whiteBtn} size-[15px]`}><ChevronRight /></button>
        </div>
      </div>
      <span className="ml-[6px] h-[14px] w-px shrink-0 bg-[#b0b0b0]" />
      <div className="ml-1 flex">
        {optionTools.map(([name, icon]) => (
          <button key={name} type="button" aria-label={name} className="flex w-[30px] shrink-0 justify-center">
            <svg viewBox="0 0 24 24" className="size-6 text-[#263238]">{icon}</svg>
          </button>
        ))}
      </div>
    </div>
  );
}

function App() {
  return (
    <div className="flex h-screen w-full flex-col overflow-hidden bg-[#ececec] font-['Inter','Noto_Sans_CJK_JP',sans-serif] text-[#222]">
      <header className="relative flex h-[19px] shrink-0 items-center justify-center border-b border-[#a6a6a6] bg-linear-to-b from-[#e3e3e3] to-[#cdcdcd]">
        <div className="absolute top-[2px] left-[7px] flex gap-2">
          <button type="button" aria-label="閉じる" className="size-3 rounded-full border border-[#e2463f] bg-[#ff5f57]" />
          <button type="button" aria-label="最小化" className="size-3 rounded-full border border-[#e0a028] bg-[#febc2e]" />
          <button type="button" aria-label="最大化" className="size-3 rounded-full border border-[#1aab29] bg-[#28c840]" />
        </div>
        <svg viewBox="0 0 12 14" className="mr-[6px] h-[14px] w-3">
          <path d="M.5.5h8l3 3v10H.5z" fill="#fff" stroke="#ddd" />
          <path d="M2 2h4v4H2z" fill="#4b7fd6" />
          <path d="M3 9h6M3 11h5" stroke="#ccc" />
        </svg>
        <h1 className="text-[12px] leading-4 text-[#444]">名称未設定</h1>
      </header>

      <div className="flex h-[37px] shrink-0 items-center border-b border-[#c8c8c8] pl-[9px]">
        <span className="-ml-[6px] mr-[5px] h-[14px] w-px shrink-0 bg-[#9c9c9c]" />
        <ToolbarRow groups={mainTools} />
      </div>
      <div className="flex h-[37px] shrink-0 border-b border-[#c8c8c8] bg-[#cbcbcb]">
        <div className="flex items-center bg-[#ececec] pr-[3px] pl-[9px]">
          <span className="-ml-[6px] mr-[5px] h-[14px] w-px shrink-0 bg-[#9c9c9c]" />
          <ToolbarRow groups={viewTools} />
        </div>
      </div>

      <main className="flex min-h-0 flex-1">
        <nav className="w-[79px] shrink-0 border-r border-[#c3c3c3]">
          <div className="mx-auto mt-1 h-px w-[31px] bg-[#a8a8a8]" />
          <div className="mt-[2px] grid h-7 w-[72px] grid-cols-2">
            <button type="button" aria-label="矢印" className="flex items-center justify-center rounded-[5px] border border-[#adadad] bg-[#c1c1c3]">
              <Cursor className="h-5 w-[14px]" />
            </button>
            <button type="button" aria-label="矩形選択" className="flex items-center justify-center">
              <svg viewBox="0 0 20 16" className="h-4 w-5 text-[#263238]"><P d="M1 1h18v14H1z" dash="3 1.500" w={1.400} /></svg>
            </button>
          </div>
          <Palette title="デザイン" tools={designTools} />
          <Palette title="ドキュメント" tools={documentTools} />
          <Palette title="ビュー" tools={viewPalette} />
        </nav>
        <InfoBox />
        <section className="flex min-w-0 flex-1 flex-col bg-white">
          <Tabs />
          <div className="relative min-h-0 flex-1">
            <Drawing />
            <button type="button" aria-label="表示" className="absolute top-px left-1/2 flex h-4 w-[31px] -translate-x-[15px] items-center justify-center rounded-b-[4px] bg-[#f1f1f1]">
              <svg viewBox="0 0 24 10" className="h-[10px] w-6 text-[#666]">
                <P d="M0 5h5M19 5h5" c={BLUE} />
                <P d="M6.500 5c3-4 8-4 11 0-3 4-8 4-11 0z" w={1.100} />
                <circle cx="12" cy="5" r="1.500" fill="none" stroke="currentColor" />
              </svg>
            </button>
          </div>
          <QuickBar />
        </section>
      </main>

      <CoordinateBar />

      <footer className="flex h-[25px] shrink-0 items-center border-t border-[#c6c6c6] pr-[10px] pb-1 pl-[6px] text-[11px]">
        <p className="flex-1 text-[10px]">要素をクリックするか、選択範囲を描画します。Ctrl+Shiftを押したままで要素/サブ要素の選択を切り替えて下さい。</p>
        <svg viewBox="0 0 18 14" className="h-[14px] w-[18px] text-[#263238]"><P d="M4 9.500H2V1.500h11.500V3M5.500 5h11v8h-11zM5.500 6h11" w={1.400} /></svg>
        <span className="mr-[11px] ml-[9px] h-[14px] w-px bg-[#9c9c9c]" />
        <span className="font-['Lato',sans-serif] text-[13px] leading-4 text-[#263238]">
          <b className="font-semibold">GRAPHISOFT</b> <span className="font-light">ID</span>
        </span>
      </footer>
    </div>
  );
}

export default App;
